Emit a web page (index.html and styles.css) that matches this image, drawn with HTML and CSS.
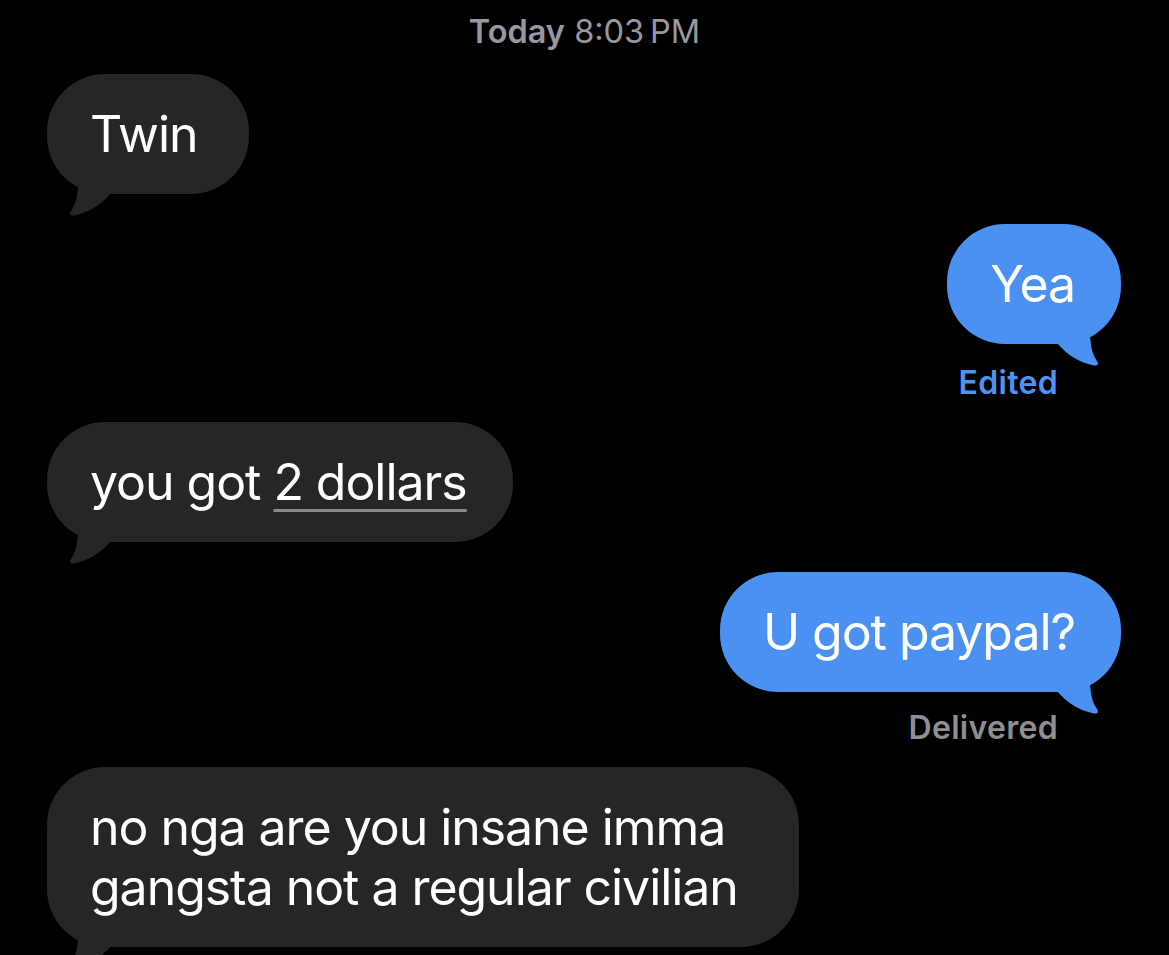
FILE: index.html
```html
<!DOCTYPE html>
<html lang="en">
<head>
<meta charset="utf-8">
<title>Messages</title>
<link rel="stylesheet" href="styles.css">
</head>
<body>
<main class="thread">
  <p class="stamp"><span class="stamp-day">Today</span> 8:03&#8239;PM</p>

  <div class="row in">
    <div class="bubble gray wide">Twin
      <svg class="tail" viewBox="0 0 80 50" aria-hidden="true"><path d="M40 0 L33 20 C32 30 31 38 26 45 C24 48 25 50 29 49.5 C42 47 55 40 66 27 L72 0 Z"/></svg>
    </div>
  </div>

  <div class="row out">
    <div class="bubble blue">Yea
      <svg class="tail" viewBox="0 0 80 50" aria-hidden="true"><path d="M40 0 L33 20 C32 30 31 38 26 45 C24 48 25 50 29 49.5 C42 47 55 40 66 27 L72 0 Z"/></svg>
    </div>
  </div>
  <p class="status edited">Edited</p>

  <div class="row in">
    <div class="bubble gray">you got <span class="link">2 dollars</span>
      <svg class="tail" viewBox="0 0 80 50" aria-hidden="true"><path d="M40 0 L33 20 C32 30 31 38 26 45 C24 48 25 50 29 49.5 C42 47 55 40 66 27 L72 0 Z"/></svg>
    </div>
  </div>

  <div class="row out">
    <div class="bubble blue">U got paypal?
      <svg class="tail" viewBox="0 0 80 50" aria-hidden="true"><path d="M40 0 L33 20 C32 30 31 38 26 45 C24 48 25 50 29 49.5 C42 47 55 40 66 27 L72 0 Z"/></svg>
    </div>
  </div>
  <p class="status delivered">Delivered</p>

  <div class="row in">
    <div class="bubble gray">no nga are you insane imma gangsta not a regular civilian
      <svg class="tail" viewBox="0 0 80 50" aria-hidden="true"><path d="M40 0 L33 20 C32 30 31 38 26 45 C24 48 25 50 29 49.5 C42 47 55 40 66 27 L72 0 Z"/></svg>
    </div>
  </div>
</main>
</body>
</html>
```

FILE: styles.css
```css
html, body {
  margin: 0;
  padding: 0;
  background: #000;
  height: 100%;
  overflow: hidden;
}

.thread {
  display: flex;
  flex-direction: column;
  padding: 12px 48px 0 47px;
  font-family: Inter, "Liberation Sans", sans-serif;
  color: #fff;
}

.stamp {
  margin: 0 -48px 0 -47px;
  text-align: center;
  font-size: 32.5px;
  line-height: 40px;
  color: #98989e;
  font-weight: 400;
}

.stamp-day {
  font-weight: 600;
}

.row {
  display: flex;
}

.row.in {
  justify-content: flex-start;
}

.row.out {
  justify-content: flex-end;
}

.stamp + .row {
  margin-top: 22px;
}

.row + .row {
  margin-top: 30px;
}

.status + .row {
  margin-top: 21px;
}

.bubble {
  position: relative;
  max-width: 752px;
  box-sizing: border-box;
  padding: 30px 46px 30px 43px;
  border-radius: 58px;
  font-size: 50px;
  line-height: 60px;
  letter-spacing: -1.05px;
}

.bubble.wide {
  min-width: 202px;
}

.bubble.gray {
  background: #262628;
}

.bubble.blue {
  background: #4a91f1;
}

.tail {
  position: absolute;
  bottom: -22px;
  width: 80px;
  height: 50px;
}

.gray .tail {
  left: -2px;
  fill: #262628;
}

.blue .tail {
  right: -2px;
  fill: #4a91f1;
  transform: scaleX(-1);
}

.link {
  text-decoration: underline;
  text-decoration-color: #8a8a8f;
  text-decoration-thickness: 3px;
  text-underline-offset: 9px;
}

.status {
  margin: 21px 0 0;
  align-self: flex-end;
  margin-right: 63px;
  font-size: 32px;
  line-height: 36px;
  font-weight: 600;
  letter-spacing: 0.3px;
}

.status.edited {
  color: #4c94f2;
}

.status.delivered {
  color: #8e8e93;
  margin-top: 18px;
}
```
